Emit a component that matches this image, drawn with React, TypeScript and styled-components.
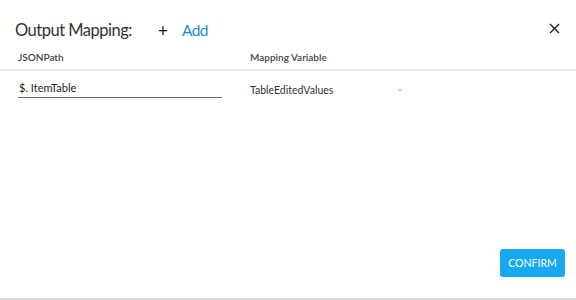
import React, { useState } from 'react';
import styled, { createGlobalStyle } from 'styled-components';

const GlobalStyle = createGlobalStyle`
  html, body {
    margin: 0;
    padding: 0;
    background: #fff;
  }
  body {
    font-family: Lato, 'Open Sans', sans-serif;
  }
`;

const Dialog = styled.div`
  width: 576px;
  height: 300px;
  box-sizing: border-box;
  border-bottom: 2px solid #dcdcdc;
  display: flex;
  flex-direction: column;
  background: #fff;
`;

const Header = styled.div`
  display: flex;
  align-items: center;
  height: 46px;
  padding: 14px 15px 0 15px;
  box-sizing: border-box;
`;

const Title = styled.h2`
  margin: 0;
  font-size: 16.5px;
  font-weight: 400;
  letter-spacing: -0.5px;
  color: #333;
`;

const AddButton = styled.button`
  display: flex;
  align-items: center;
  gap: 15px;
  margin-left: 26px;
  padding: 0;
  border: 0;
  background: none;
  cursor: pointer;
  font-family: inherit;
  font-size: 15.5px;
  letter-spacing: -0.7px;
  color: #1c8ad0;
`;

const Plus = styled.span`
  color: #111;
  font-size: 17px;
  line-height: 1;
`;

const CloseButton = styled.button`
  margin-left: auto;
  margin-top: -4px;
  border: 0;
  background: none;
  padding: 0;
  width: 14px;
  height: 14px;
  display: flex;
  align-items: center;
  justify-content: center;
  cursor: pointer;
`;

const Row = styled.div<{ $head?: boolean }>`
  display: grid;
  grid-template-columns: 232px 1fr;
  align-items: end;
  padding: 0 0 0 18px;
  height: ${(p) => (p.$head ? '25px' : '27px')};
  border-bottom: ${(p) => (p.$head ? '2px solid #ebebeb' : '0')};
  box-sizing: border-box;
  padding-bottom: ${(p) => (p.$head ? '6px' : '0')};
`;

const HeadCell = styled.div`
  font-size: 10px;
  font-weight: 600;
  color: #444;
`;

const Input = styled.input`
  width: 204px;
  box-sizing: border-box;
  border: 0;
  border-bottom: 1px solid #6b6b6b;
  padding: 0 0 3px 1px;
  font-family: inherit;
  font-size: 11px;
  color: #222;
  outline: none;
  background: transparent;
`;

const Select = styled.div`
  display: flex;
  align-items: center;
  width: 153px;
  justify-content: space-between;
  font-size: 10.5px;
  color: #333;
  padding-bottom: 2px;
`;

const Caret = styled.span`
  width: 0;
  height: 0;
  border-left: 3px solid transparent;
  border-right: 3px solid transparent;
  border-top: 3px solid #cfcfcf;
`;

const Spacer = styled.div`
  flex: 1;
`;

const Footer = styled.div`
  display: flex;
  justify-content: flex-end;
  padding: 0 11px 21px 0;
`;

const ConfirmButton = styled.button`
  width: 65px;
  height: 28px;
  border: 0;
  border-radius: 3px;
  background: #17a8f0;
  color: #fff;
  font-family: inherit;
  font-size: 10.5px;
  cursor: pointer;
`;

export default function App() {
  const [path, setPath] = useState('$. ItemTable');
  return (
    <>
      <GlobalStyle />
      <Dialog>
        <Header>
          <Title>Output Mapping:</Title>
          <AddButton>
            <Plus>+</Plus>
            Add
          </AddButton>
          <CloseButton aria-label="close">
            <svg width="11" height="11" viewBox="0 0 11 11">
              <path d="M1 1L10 10M10 1L1 10" stroke="#222" strokeWidth="1.4" />
            </svg>
          </CloseButton>
        </Header>
        <Row $head>
          <HeadCell>JSONPath</HeadCell>
          <HeadCell>Mapping Variable</HeadCell>
        </Row>
        <Row>
          <Input value={path} onChange={(e) => setPath(e.target.value)} />
          <Select>
            TableEditedValues
            <Caret />
          </Select>
        </Row>
        <Spacer />
        <Footer>
          <ConfirmButton>CONFIRM</ConfirmButton>
        </Footer>
      </Dialog>
    </>
  );
}
